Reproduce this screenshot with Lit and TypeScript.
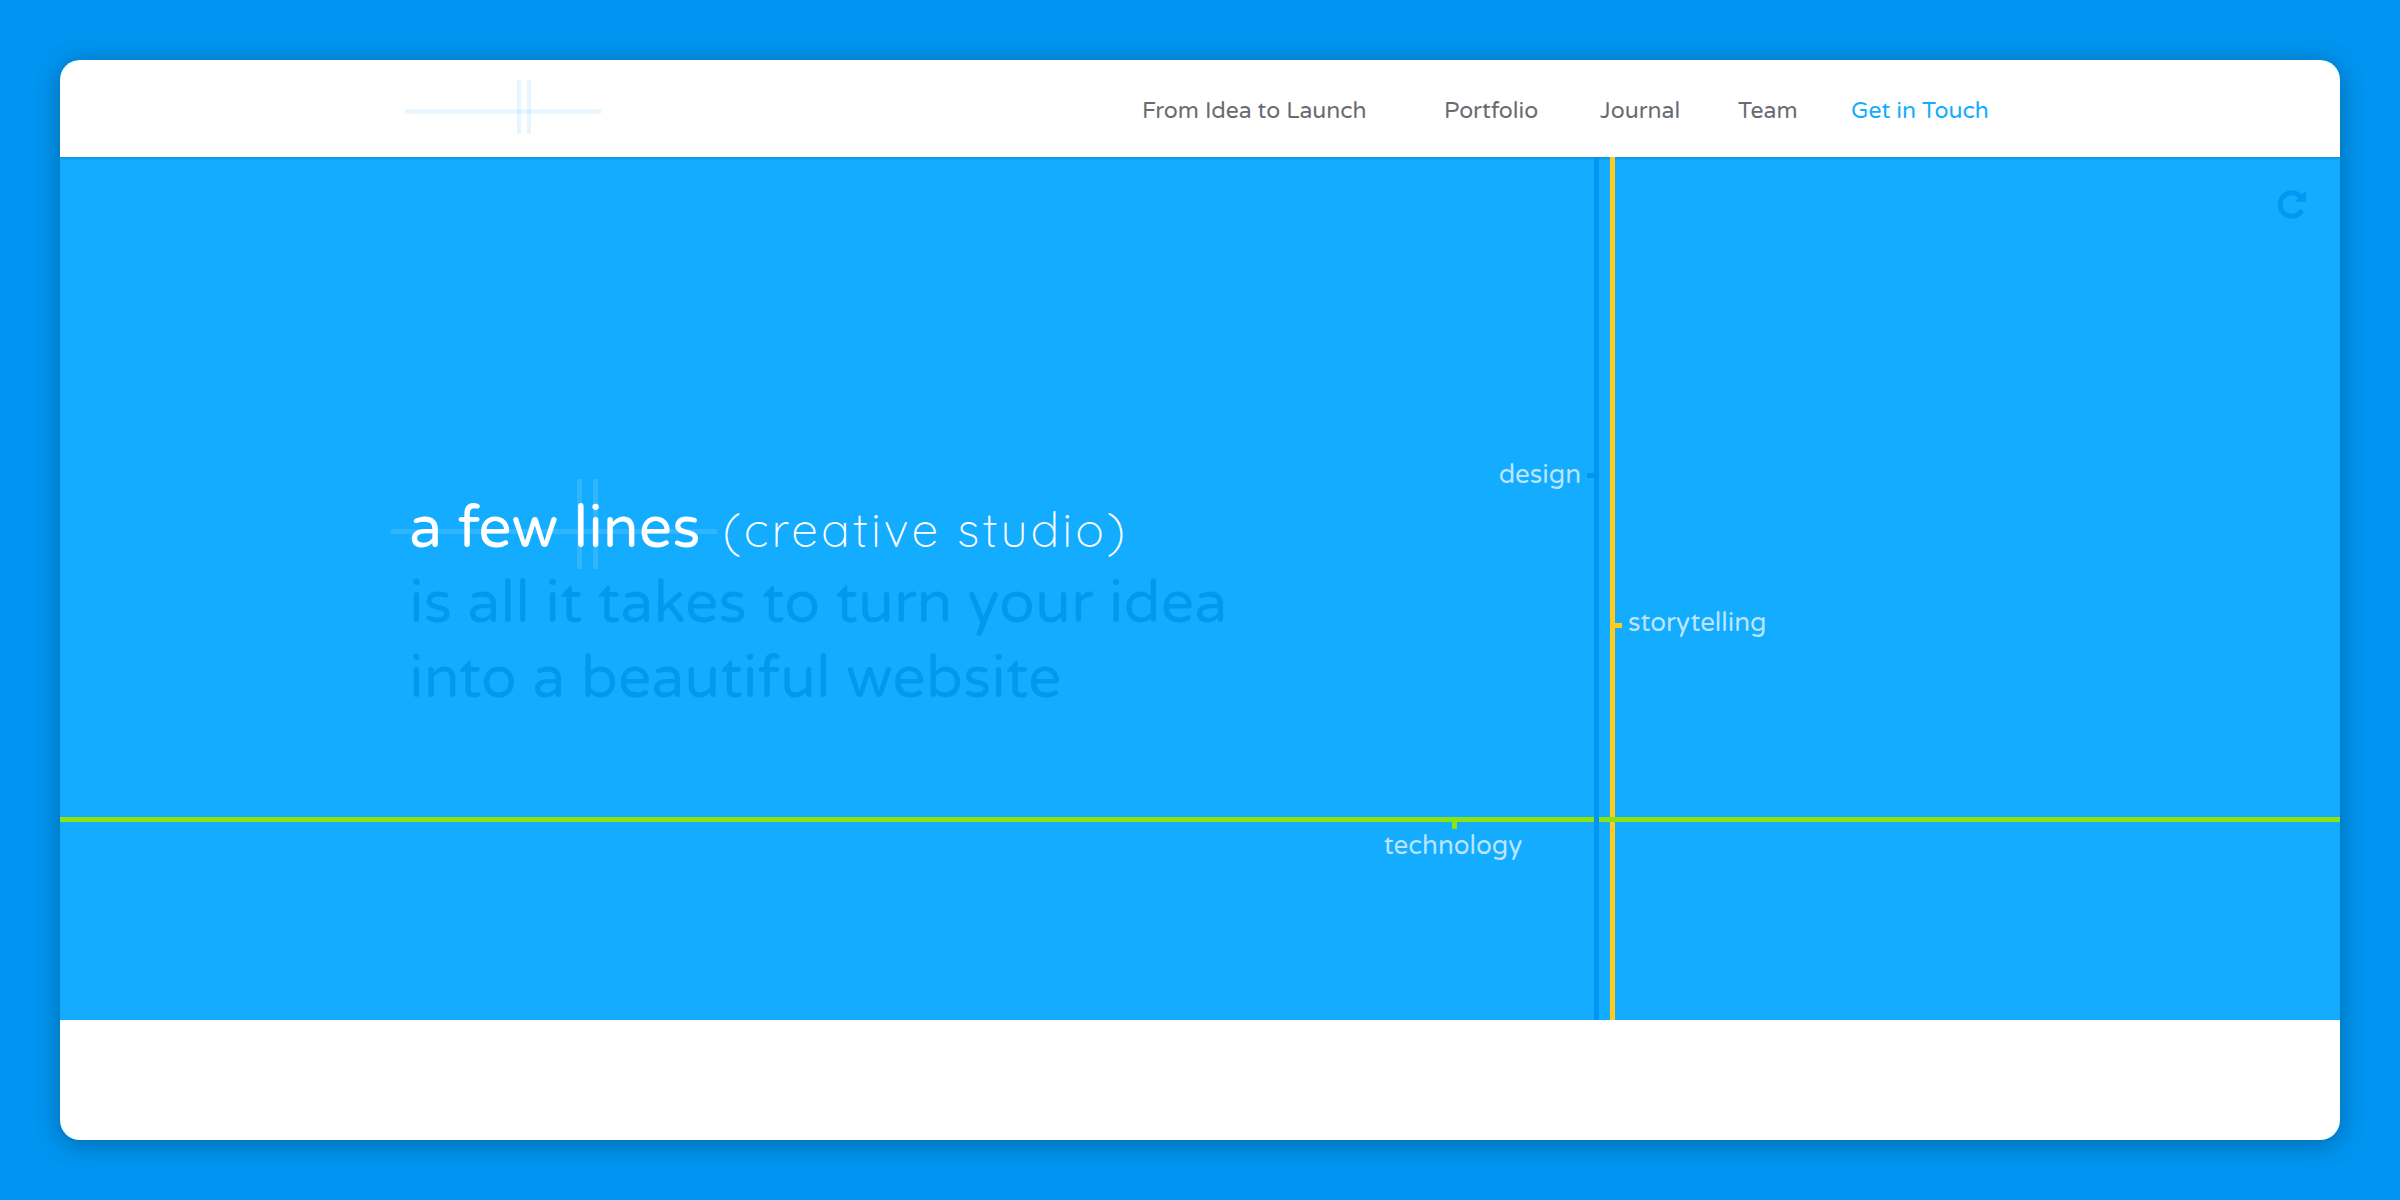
import { LitElement, html, css } from "lit";
import { customElement } from "lit/decorators.js";

@customElement("app-root")
export class AppRoot extends LitElement {
  static styles = css`
    :host {
      display: block;
      box-sizing: border-box;
      min-height: 100vh;
      padding: 60px;
      background: #0095f0;
      font-family: "Varela Round", "Noto Sans", sans-serif;
    }
    .window {
      display: flex;
      flex-direction: column;
      box-sizing: border-box;
      min-height: calc(100vh - 120px);
      border-radius: 20px;
      overflow: hidden;
      background: #fff;
      box-shadow: 0 4px 26px rgba(0, 0, 0, 0.3);
    }
    .wrap {
      box-sizing: border-box;
      width: 100%;
      max-width: 1590px;
      margin: 0 auto;
    }
    .bar {
      display: flex;
      align-items: center;
      justify-content: space-between;
      height: 97px;
    }
    .logo { display: block; padding-bottom: 4px; }
    .logo svg { display: block; }
    .links {
      display: grid;
      grid-template-columns: 302px 156px 138px 113px 144px;
      margin: 0;
      padding: 4px 0 0;
      list-style: none;
      font-size: 23px;
      line-height: 32px;
    }
    .links a { color: #6a6b70; text-decoration: none; white-space: nowrap; }
    .links .contact { color: #13acff; }

    .hero {
      position: relative;
      display: flex;
      flex: 1;
      align-items: center;
      background: #13acff;
      box-shadow: inset 0 2px 2px rgba(0, 0, 0, 0.12);
    }
    .copy {
      padding: 30px 4px 0;
    }
    h1 {
      margin: 0;
      font-size: 59px;
      font-weight: 400;
      line-height: 75px;
      color: #0099ee;
    }
    .line { display: block; }
    .lead {
      display: flex;
      align-items: baseline;
      gap: 22px;
      color: #fff;
    }
    .name { position: relative; }
    .mark {
      position: absolute;
      left: -18px;
      top: -12px;
    }
    .word { position: relative; }
    .kind {
      font-family: "Quicksand", "Open Sans", sans-serif;
      font-size: 48px;
      font-weight: 300;
      line-height: 60px;
      letter-spacing: 3px;
    }

    .stroke { position: absolute; }
    .story { left: calc(50% + 410px); top: 0; bottom: 0; width: 5px; background: #ffcb1f; }
    .tech { left: 0; right: 0; top: 660px; height: 5px; background: #8be40f; }
    .design { left: calc(50% + 394px); top: 0; bottom: 0; width: 5px; background: #0095f0; }
    .tick { position: absolute; background: inherit; }
    .design .tick { right: 5px; top: 316px; width: 7px; height: 5px; }
    .story .tick { left: 5px; top: 466px; width: 7px; height: 5px; }
    .tech .tick { left: calc(50% + 252px); top: 5px; width: 5px; height: 7px; }
    .label {
      position: absolute;
      font-size: 26px;
      line-height: 32px;
      color: #b9e5ff;
      white-space: nowrap;
    }
    .design .label { right: 18px; top: 302px; }
    .story .label { left: 18px; top: 450px; }
    .tech .label { left: calc(50% + 253px); top: 13px; transform: translateX(-50%); }

    .replay {
      position: absolute;
      top: 33px;
      right: 34px;
      padding: 0;
      border: 0;
      background: none;
      color: #0099f1;
      cursor: pointer;
    }
    .replay svg { display: block; }
    .foot { height: 120px; }
  `;

  render() {
    return html`
      <div class="window">
        <header class="wrap bar">
          <a class="logo" href="#" aria-label="a few lines">
            <svg width="196" height="54" viewBox="0 0 196 54" fill="#13acff" fill-opacity="0.11">
              <rect x="0" y="29.500" width="196" height="4" />
              <rect x="112" y="0" width="4" height="54" />
              <rect x="122" y="0" width="4" height="54" />
            </svg>
          </a>
          <nav>
            <ul class="links">
              <li><a href="#idea">From Idea to Launch</a></li>
              <li><a href="#portfolio">Portfolio</a></li>
              <li><a href="#journal">Journal</a></li>
              <li><a href="#team">Team</a></li>
              <li><a class="contact" href="#contact">Get in Touch</a></li>
            </ul>
          </nav>
        </header>

        <section class="hero">
          <div class="stroke story"><span class="tick"></span><span class="label">storytelling</span></div>
          <div class="stroke tech"><span class="tick"></span><span class="label">technology</span></div>
          <div class="stroke design"><span class="tick"></span><span class="label">design</span></div>
          <div class="wrap copy">
            <h1>
              <span class="line lead">
                <span class="name">
                  <svg class="mark" width="326" height="90" viewBox="0 0 326 90" fill="#fff" fill-opacity="0.12" aria-hidden="true">
                    <rect x="0" y="50" width="326" height="5" />
                    <rect x="186" y="0" width="5" height="90" />
                    <rect x="202" y="0" width="5" height="90" />
                  </svg>
                  <span class="word">a few lines</span>
                </span>
                <span class="kind">(creative studio)</span>
              </span>
              <span class="line">is all it takes to turn your idea</span>
              <span class="line">into a beautiful website</span>
            </h1>
          </div>
          <button class="replay" type="button" aria-label="Replay">
            <svg width="28" height="29" viewBox="0 0 28 29">
              <path d="M22.800 22.200A11.800 11.800 0 1 1 22 6" fill="none" stroke="currentColor" stroke-width="5" stroke-linecap="round" />
              <path d="M28 1.500V11.800H18.200Q17.200 11.400 17.900 10.500L26.700 1.500Q27.500 .8 28 1.500Z" fill="currentColor" />
            </svg>
          </button>
        </section>
        <footer class="foot"></footer>
      </div>
    `;
  }
}
